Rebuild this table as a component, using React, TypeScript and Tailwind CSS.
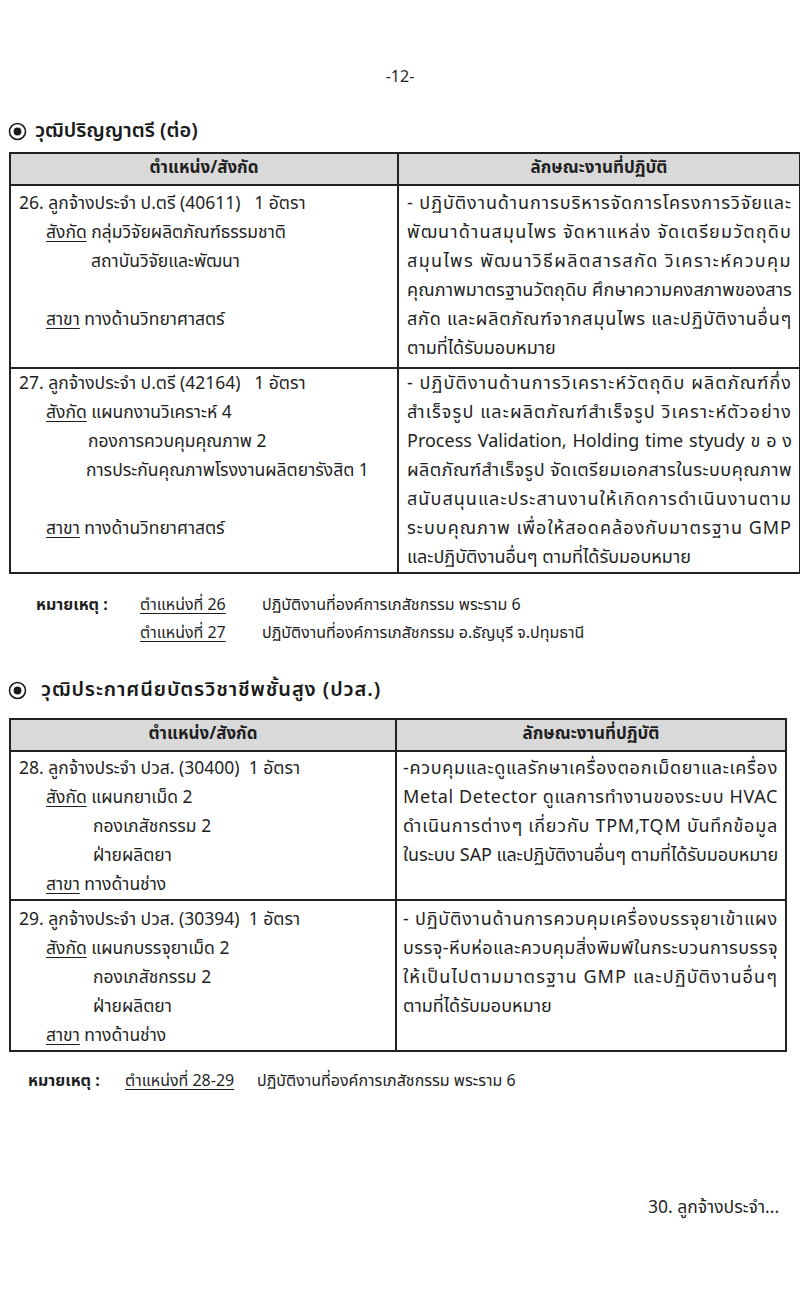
import React, { useLayoutEffect, useRef, useState } from "react";

const font = { fontFamily: '"Noto Sans Thai", "Tahoma", "Loma", "Garuda", "Noto Sans", "DejaVu Sans", sans-serif' };

// one line of the right-hand column, stretched to the cell width the way
// Word's Thai distributed justification does it (letter spacing is measured)
function J({ children, last, plain }: { children: React.ReactNode; last?: boolean; plain?: boolean }) {
  const ref = useRef<HTMLSpanElement>(null);
  const [ls, setLs] = useState(0);

  useLayoutEffect(() => {
    if (last || plain) return;
    const fit = () => {
      const el = ref.current;
      if (!el || !el.parentElement) return;
      el.style.letterSpacing = "0px";
      const w0 = el.getBoundingClientRect().width;
      el.style.letterSpacing = "1px";
      const w1 = el.getBoundingClientRect().width;
      const per = w1 - w0;
      const target = el.parentElement.clientWidth;
      const s = per > 0 ? (target - w0) / per : 0;
      el.style.letterSpacing = `${s}px`;
      setLs(s);
    };
    fit();
    document.fonts?.ready.then(fit);
  }, [last, plain]);

  if (plain) {
    return (
      <div className="h-[29px] leading-[29px] whitespace-nowrap text-justify [text-align-last:justify]">{children}</div>
    );
  }
  return (
    <div className="h-[29px] leading-[29px] whitespace-nowrap">
      <span ref={ref} className="inline-block" style={last ? undefined : { letterSpacing: `${ls}px` }}>
        {children}
      </span>
    </div>
  );
}

function L({ children, indent = "" }: { children?: React.ReactNode; indent?: string }) {
  return <div className={`h-[29px] leading-[29px] whitespace-nowrap ${indent}`}>{children}</div>;
}

function U({ children }: { children: React.ReactNode }) {
  return <span className="underline underline-offset-[3px]">{children}</span>;
}

function Heading({ children, wide }: { children: React.ReactNode; wide?: boolean }) {
  return (
    <div className="flex items-center gap-2 pl-[8px] text-[20px] leading-[30px] font-semibold text-[#1a1a1a]">
      <svg width="19" height="19" viewBox="0 0 18 18" className="shrink-0">
        <circle cx="9" cy="9" r="7.6" fill="none" stroke="#1a1a1a" strokeWidth="1.5" />
        <circle cx="9" cy="9" r="3.7" fill="#1a1a1a" />
      </svg>
      <span className={wide ? "pl-[6px] tracking-[0.9px]" : ""}>{children}</span>
    </div>
  );
}

function HeaderRow() {
  return (
    <tr className="bg-[#d9d9d9] h-[32px] text-[17px]">
      <th className="border-2 border-[#222] font-bold text-center align-middle">ตำแหน่ง/สังกัด</th>
      <th className="border-2 border-[#222] font-bold text-center align-middle">ลักษณะงานที่ปฏิบัติ</th>
    </tr>
  );
}

export default function App() {
  return (
    <div className="w-[800px] h-[1302px] bg-white text-[#1f1f1f] text-[16px] overflow-hidden" style={font}>
      <div className="pt-[64px] text-center text-[16px] leading-[26px]">-12-</div>

      <div className="mt-[26px]">
        <Heading>วุฒิปริญญาตรี (ต่อ)</Heading>
      </div>

      <table className="mt-[6px] ml-[9px] w-[790px] border-collapse table-fixed text-[17.5px]">
        <colgroup>
          <col className="w-[388px]" />
          <col className="w-[402px]" />
        </colgroup>
        <thead>
          <HeaderRow />
        </thead>
        <tbody>
          <tr className="align-top">
            <td className="border-2 border-[#222] pl-[8px] pt-[3px] pb-[4px]">
              <L>26. ลูกจ้างประจำ ป.ตรี (40611)&nbsp;&nbsp;&nbsp;1 อัตรา</L>
              <L indent="pl-[27px]"><U>สังกัด</U> กลุ่มวิจัยผลิตภัณฑ์ธรรมชาติ</L>
              <L indent="pl-[72px]">สถาบันวิจัยและพัฒนา</L>
              <L />
              <L indent="pl-[27px]"><U>สาขา</U> ทางด้านวิทยาศาสตร์</L>
            </td>
            <td className="border-2 border-[#222] pl-[8px] pr-[7px] pt-[3px] pb-[4px] text-[18px]">
              <J>- ปฏิบัติงานด้านการบริหารจัดการโครงการวิจัยและ</J>
              <J>พัฒนาด้านสมุนไพร จัดหาแหล่ง จัดเตรียมวัตถุดิบ</J>
              <J>สมุนไพร พัฒนาวิธีผลิตสารสกัด วิเคราะห์ควบคุม</J>
              <J>คุณภาพมาตรฐานวัตถุดิบ ศึกษาความคงสภาพของสาร</J>
              <J>สกัด และผลิตภัณฑ์จากสมุนไพร และปฏิบัติงานอื่นๆ</J>
              <J last>ตามที่ได้รับมอบหมาย</J>
            </td>
          </tr>
          <tr className="align-top">
            <td className="border-2 border-[#222] pl-[8px] pt-[0px] pb-[0px]">
              <L>27. ลูกจ้างประจำ ป.ตรี (42164)&nbsp;&nbsp;&nbsp;1 อัตรา</L>
              <L indent="pl-[27px]"><U>สังกัด</U> แผนกงานวิเคราะห์ 4</L>
              <L indent="pl-[69px]">กองการควบคุมคุณภาพ 2</L>
              <L indent="pl-[67px]">การประกันคุณภาพโรงงานผลิตยารังสิต 1</L>
              <L />
              <L indent="pl-[27px]"><U>สาขา</U> ทางด้านวิทยาศาสตร์</L>
            </td>
            <td className="border-2 border-[#222] pl-[8px] pr-[7px] pt-[0px] pb-[0px] text-[18px]">
              <J>- ปฏิบัติงานด้านการวิเคราะห์วัตถุดิบ ผลิตภัณฑ์กึ่ง</J>
              <J>สำเร็จรูป และผลิตภัณฑ์สำเร็จรูป วิเคราะห์ตัวอย่าง</J>
              <J plain>Process Validation, Holding time styudy ข อ ง</J>
              <J>ผลิตภัณฑ์สำเร็จรูป จัดเตรียมเอกสารในระบบคุณภาพ</J>
              <J>สนับสนุนและประสานงานให้เกิดการดำเนินงานตาม</J>
              <J>ระบบคุณภาพ เพื่อให้สอดคล้องกับมาตรฐาน GMP</J>
              <J last>และปฏิบัติงานอื่นๆ ตามที่ได้รับมอบหมาย</J>
            </td>
          </tr>
        </tbody>
      </table>

      <div className="mt-[17px] text-[16px] leading-[28px]">
        <div className="flex">
          <span className="w-[140px] pl-[36px] font-bold shrink-0">หมายเหตุ :</span>
          <span className="w-[122px] shrink-0"><U>ตำแหน่งที่ 26</U></span>
          <span>ปฏิบัติงานที่องค์การเภสัชกรรม พระราม 6</span>
        </div>
        <div className="flex">
          <span className="w-[140px] shrink-0"></span>
          <span className="w-[122px] shrink-0"><U>ตำแหน่งที่ 27</U></span>
          <span>ปฏิบัติงานที่องค์การเภสัชกรรม อ.ธัญบุรี จ.ปทุมธานี</span>
        </div>
      </div>

      <div className="mt-[28px]">
        <Heading wide>วุฒิประกาศนียบัตรวิชาชีพชั้นสูง (ปวส.)</Heading>
      </div>

      <table className="mt-[13px] ml-[9px] w-[776px] border-collapse table-fixed text-[17.5px]">
        <colgroup>
          <col className="w-[386px]" />
          <col className="w-[390px]" />
        </colgroup>
        <thead>
          <HeaderRow />
        </thead>
        <tbody>
          <tr className="align-top">
            <td className="border-2 border-[#222] pl-[8px] pt-[2px] pb-[0px]">
              <L>28. ลูกจ้างประจำ ปวส. (30400)&nbsp;&nbsp;1 อัตรา</L>
              <L indent="pl-[27px]"><U>สังกัด</U> แผนกยาเม็ด 2</L>
              <L indent="pl-[74px]">กองเภสัชกรรม 2</L>
              <L indent="pl-[74px]">ฝ่ายผลิตยา</L>
              <L indent="pl-[27px]"><U>สาขา</U> ทางด้านช่าง</L>
            </td>
            <td className="border-2 border-[#222] pl-[6px] pr-[7px] pt-[2px] pb-[0px] text-[18px]">
              <J>-ควบคุมและดูแลรักษาเครื่องตอกเม็ดยาและเครื่อง</J>
              <J>Metal Detector ดูแลการทำงานของระบบ HVAC</J>
              <J>ดำเนินการต่างๆ เกี่ยวกับ TPM,TQM บันทึกข้อมูล</J>
              <J>ในระบบ SAP และปฏิบัติงานอื่นๆ ตามที่ได้รับมอบหมาย</J>
            </td>
          </tr>
          <tr className="align-top">
            <td className="border-2 border-[#222] pl-[8px] pt-[4px] pb-[0px]">
              <L>29. ลูกจ้างประจำ ปวส. (30394)&nbsp;&nbsp;1 อัตรา</L>
              <L indent="pl-[27px]"><U>สังกัด</U> แผนกบรรจุยาเม็ด 2</L>
              <L indent="pl-[74px]">กองเภสัชกรรม 2</L>
              <L indent="pl-[74px]">ฝ่ายผลิตยา</L>
              <L indent="pl-[27px]"><U>สาขา</U> ทางด้านช่าง</L>
            </td>
            <td className="border-2 border-[#222] pl-[6px] pr-[7px] pt-[4px] pb-[0px] text-[18px]">
              <J>- ปฏิบัติงานด้านการควบคุมเครื่องบรรจุยาเข้าแผง</J>
              <J>บรรจุ-หีบห่อและควบคุมสิ่งพิมพ์ในกระบวนการบรรจุ</J>
              <J>ให้เป็นไปตามมาตรฐาน GMP และปฏิบัติงานอื่นๆ</J>
              <J last>ตามที่ได้รับมอบหมาย</J>
            </td>
          </tr>
        </tbody>
      </table>

      <div className="mt-[15px] text-[16px] leading-[28px]">
        <div className="flex">
          <span className="w-[125px] pl-[28px] font-bold shrink-0">หมายเหตุ :</span>
          <span className="w-[132px] shrink-0"><U>ตำแหน่งที่ 28-29</U></span>
          <span>ปฏิบัติงานที่องค์การเภสัชกรรม พระราม 6</span>
        </div>
      </div>

      <div className="mt-[98px] pl-[648px] text-[17.5px] leading-[30px] whitespace-nowrap">30. ลูกจ้างประจำ...</div>
    </div>
  );
}
